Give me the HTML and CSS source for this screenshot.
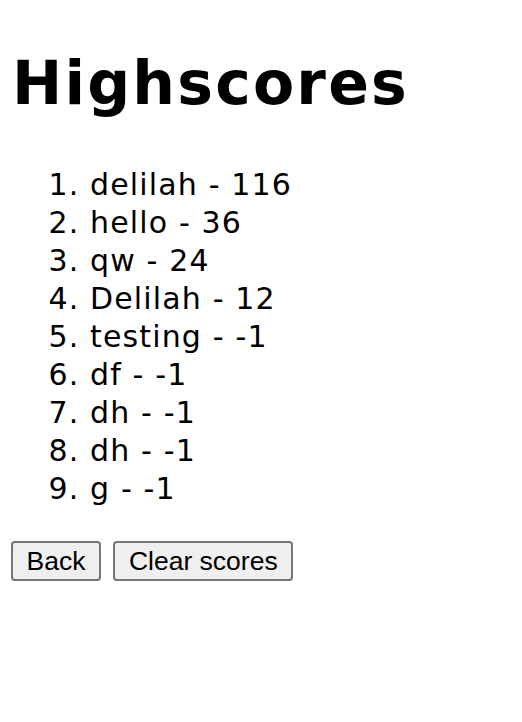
FILE: index.html
```html
<!DOCTYPE html>
<html>
<head>
<meta charset="utf-8">
<link rel="stylesheet" href="styles.css">
</head>
<body>
<h1 class="title">Highscores</h1>
<ol class="scores">
<li>delilah - 116</li>
<li>hello - 36</li>
<li>qw - 24</li>
<li>Delilah - 12</li>
<li>testing - -1</li>
<li>df - -1</li>
<li>dh - -1</li>
<li>dh - -1</li>
<li>g - -1</li>
</ol>
<div class="actions">
<button class="btn">Back</button>
<button class="btn">Clear scores</button>
</div>
</body>
</html>
```
FILE: styles.css
```css
body {
  margin: 8px;
  font-family: "DejaVu Sans", Verdana, sans-serif;
  font-size: 30px;
  color: #000;
  background: #fff;
}
.title {
  font-size: 60px;
  font-weight: bold;
  letter-spacing: 2.2px;
  margin: 40px 0 48px 4px;
  line-height: 70px;
}
.scores {
  margin: 0 0 33px 0;
  padding-left: 82px;
  line-height: 38px;
  letter-spacing: 1.15px;
}
.actions {
  display: flex;
  gap: 12.5px;
  padding-left: 3px;
}
.btn {
  font-family: "Liberation Sans", Arial, sans-serif;
  font-size: 26.5px;
  height: 40px;
  padding: 0 13.5px;
  background: #efefef;
  border: 2px solid #767676;
  border-radius: 4px;
  color: #000;
}
```
